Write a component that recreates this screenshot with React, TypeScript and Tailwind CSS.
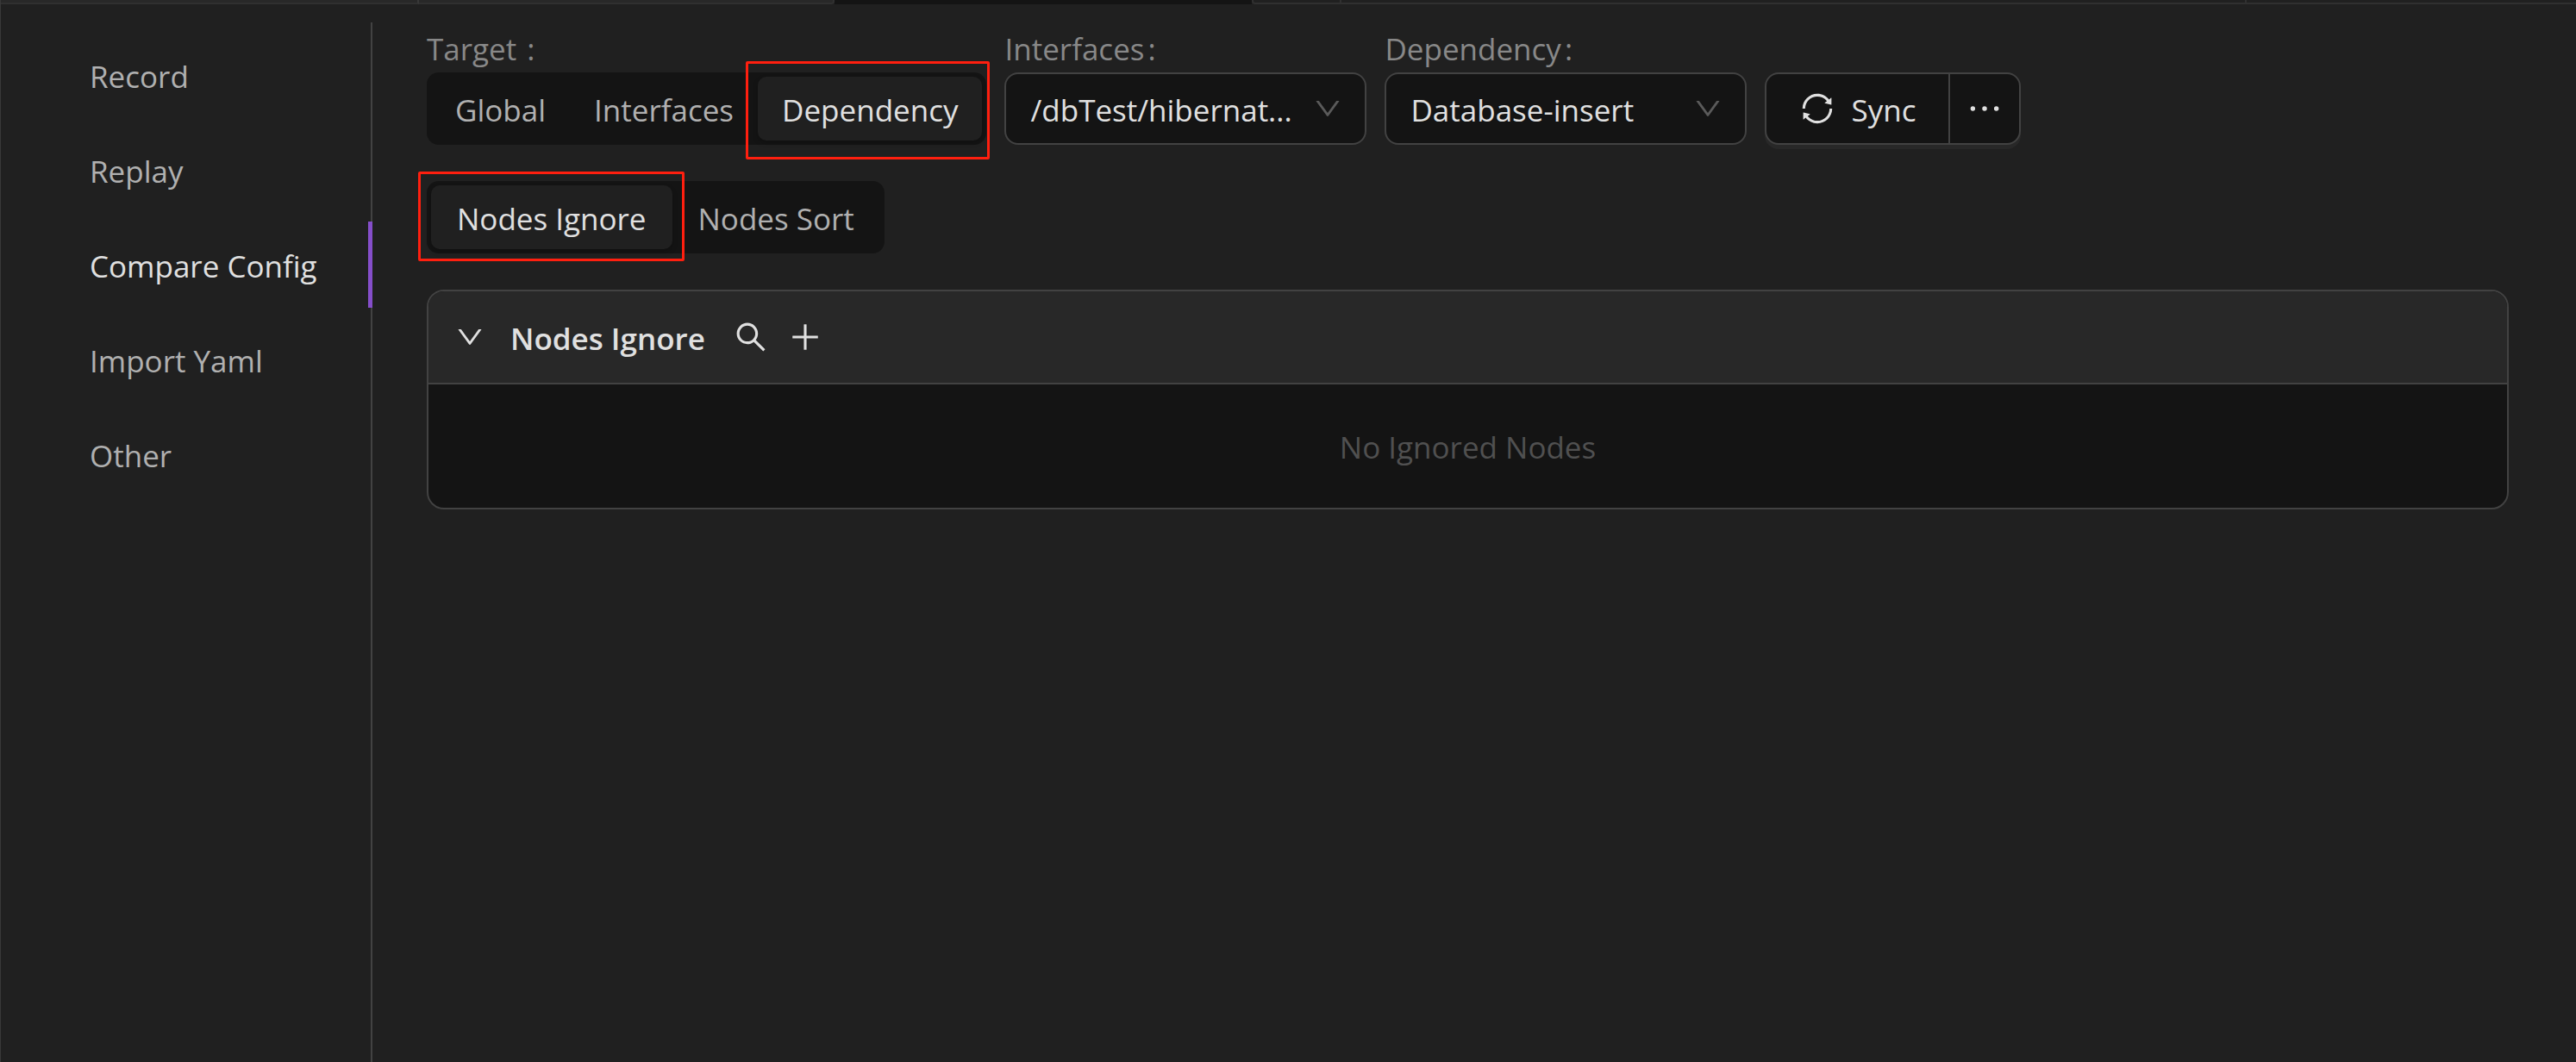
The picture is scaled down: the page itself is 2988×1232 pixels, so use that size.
import { useState, type ReactNode } from 'react';
import {
  AiOutlineDown,
  AiOutlineEllipsis,
  AiOutlinePlus,
  AiOutlineSearch,
  AiOutlineSync,
} from 'react-icons/ai';

const menu = ['Record', 'Replay', 'Compare Config', 'Import Yaml', 'Other'];

function TabStrip() {
  return (
    <div className="flex h-[5px] w-full">
      <div className="w-[485px] border-r-2 border-b-2 border-r-[#383838] border-b-[#303030] bg-[#282828]" />
      <div className="w-[482px] rounded-br-sm border-r-2 border-b-2 border-[#303030] bg-[#282828]" />
      <div className="w-[484px] bg-[#141414]" />
      <div className="w-[104px] rounded-bl-sm border-x-2 border-b-2 border-[#303030]" />
      <div className="w-[1050px] border-r-2 border-b-2 border-[#303030]" />
      <div className="grow border-b-2 border-[#303030]" />
    </div>
  );
}

function Sidebar({ active, onSelect }: { active: string; onSelect: (s: string) => void }) {
  return (
    <nav className="mt-[21px] flex w-[431px] shrink-0 flex-col gap-[10px] border-r-2 border-[#424242] pt-[11px]">
      {menu.map((item) => (
        <button
          key={item}
          type="button"
          onClick={() => onSelect(item)}
          className={
            item === active
              ? '-mr-[2px] h-[100px] border-r-[5px] border-[#854eca] pt-1 pl-[103px] text-left text-[#e0e0e0]'
              : 'h-[100px] pt-1 pl-[103px] text-left text-[#b0b0b0]'
          }
        >
          {item}
        </button>
      ))}
    </nav>
  );
}

function Segmented({
  options,
  value,
  onChange,
  marker,
  className,
}: {
  options: string[];
  value: string;
  onChange: (s: string) => void;
  marker: ReactNode;
  className: string;
}) {
  return (
    <div className={`flex h-[84px] w-fit rounded-[14px] bg-[#141414] p-[5px] ${className}`}>
      {options.map((option) => (
        <button
          key={option}
          type="button"
          aria-pressed={option === value}
          onClick={() => onChange(option)}
          className={
            option === value
              ? 'relative rounded-[10px] bg-[#202020] pt-1 text-[#e0e0e0] shadow-[0_3px_6px_rgba(0,0,0,0.2)]'
              : 'pt-1 text-[#b0b0b0]'
          }
        >
          {option}
          {option === value && marker}
        </button>
      ))}
    </div>
  );
}

function SelectField({ id, label, value }: { id: string; label: string; value: string }) {
  return (
    <div className="flex w-[420px] flex-col">
      <label htmlFor={id} className="leading-[54px] text-[#888888]">
        {label}
        <span className="ml-1">:</span>
      </label>
      <div className="relative">
        <select
          id={id}
          defaultValue={value}
          className="h-[84px] w-full appearance-none rounded-2xl border-2 border-[#424242] bg-[#141414] pt-1 pr-20 pl-7 text-[#e0e0e0]"
        >
          <option>{value}</option>
        </select>
        <AiOutlineDown
          size={36}
          className="pointer-events-none absolute top-6 right-[27px] text-[#5a5a5a]"
        />
      </div>
    </div>
  );
}

export default function App() {
  const [page, setPage] = useState('Compare Config');
  const [target, setTarget] = useState('Dependency');
  const [kind, setKind] = useState('Nodes Ignore');

  return (
    <div className='flex min-h-screen flex-col border-l border-[#383838] bg-[#202020] font-["Open_Sans",sans-serif] text-[35px]'>
      <TabStrip />
      <div className="flex grow">
        <Sidebar active={page} onSelect={setPage} />
        <main className="flex grow flex-col gap-[42px] pt-[25px] pr-[78px] pl-[63px]">
          <div className="flex items-end gap-[21px]">
            <div>
              <div className="leading-[54px] text-[#888888]">
                Target<span className="ml-3">:</span>
              </div>
              <Segmented
                className="[&>button]:px-7"
                options={['Global', 'Interfaces', 'Dependency']}
                value={target}
                onChange={setTarget}
                marker={
                  <span className="absolute -top-[18px] -right-[9px] -bottom-[22px] -left-[14px] rounded-xs border-3 border-[#ff1f0f]" />
                }
              />
            </div>
            <SelectField id="interfaces" label="Interfaces" value="/dbTest/hibernat..." />
            <SelectField id="dependency" label="Dependency" value="Database-insert" />
            <div className="flex h-[84px] rounded-2xl border-2 border-[#424242] bg-[#141414] text-[#e0e0e0] shadow-[0_5px_0_#282828]">
              <button type="button" className="flex items-center gap-[18px] px-[38px]">
                <AiOutlineSync size={42} />
                <span className="pt-1">Sync</span>
              </button>
              <button
                type="button"
                aria-label="More"
                className="flex w-[82px] items-center justify-center border-l-2 border-[#424242]"
              >
                <AiOutlineEllipsis size={50} />
              </button>
            </div>
          </div>

          <Segmented
            className="[&>button]:px-[30px]"
            options={['Nodes Ignore', 'Nodes Sort']}
            value={kind}
            onChange={setKind}
            marker={
              <span className="absolute -top-4 -right-[14px] -bottom-[14px] -left-[15px] rounded-xs border-3 border-[#ff1f0f]" />
            }
          />

          <section className="overflow-hidden rounded-[20px] border-2 border-[#424242] bg-[#141414]">
            <header className="flex h-[108px] items-center border-b-2 border-[#424242] bg-[#282828] pl-[30px] text-[#e0e0e0]">
              <button type="button" aria-label="Collapse">
                <AiOutlineDown size={36} />
              </button>
              <h2 className="mr-8 ml-[29px] pt-1 font-semibold">Nodes Ignore</h2>
              <button type="button" aria-label="Search" className="mr-[21px]">
                <AiOutlineSearch size={42} />
              </button>
              <button type="button" aria-label="Add">
                <AiOutlinePlus size={42} />
              </button>
            </header>
            <p className="pt-[2px] text-center leading-[141px] text-[#505050]">No Ignored Nodes</p>
          </section>
        </main>
      </div>
    </div>
  );
}
